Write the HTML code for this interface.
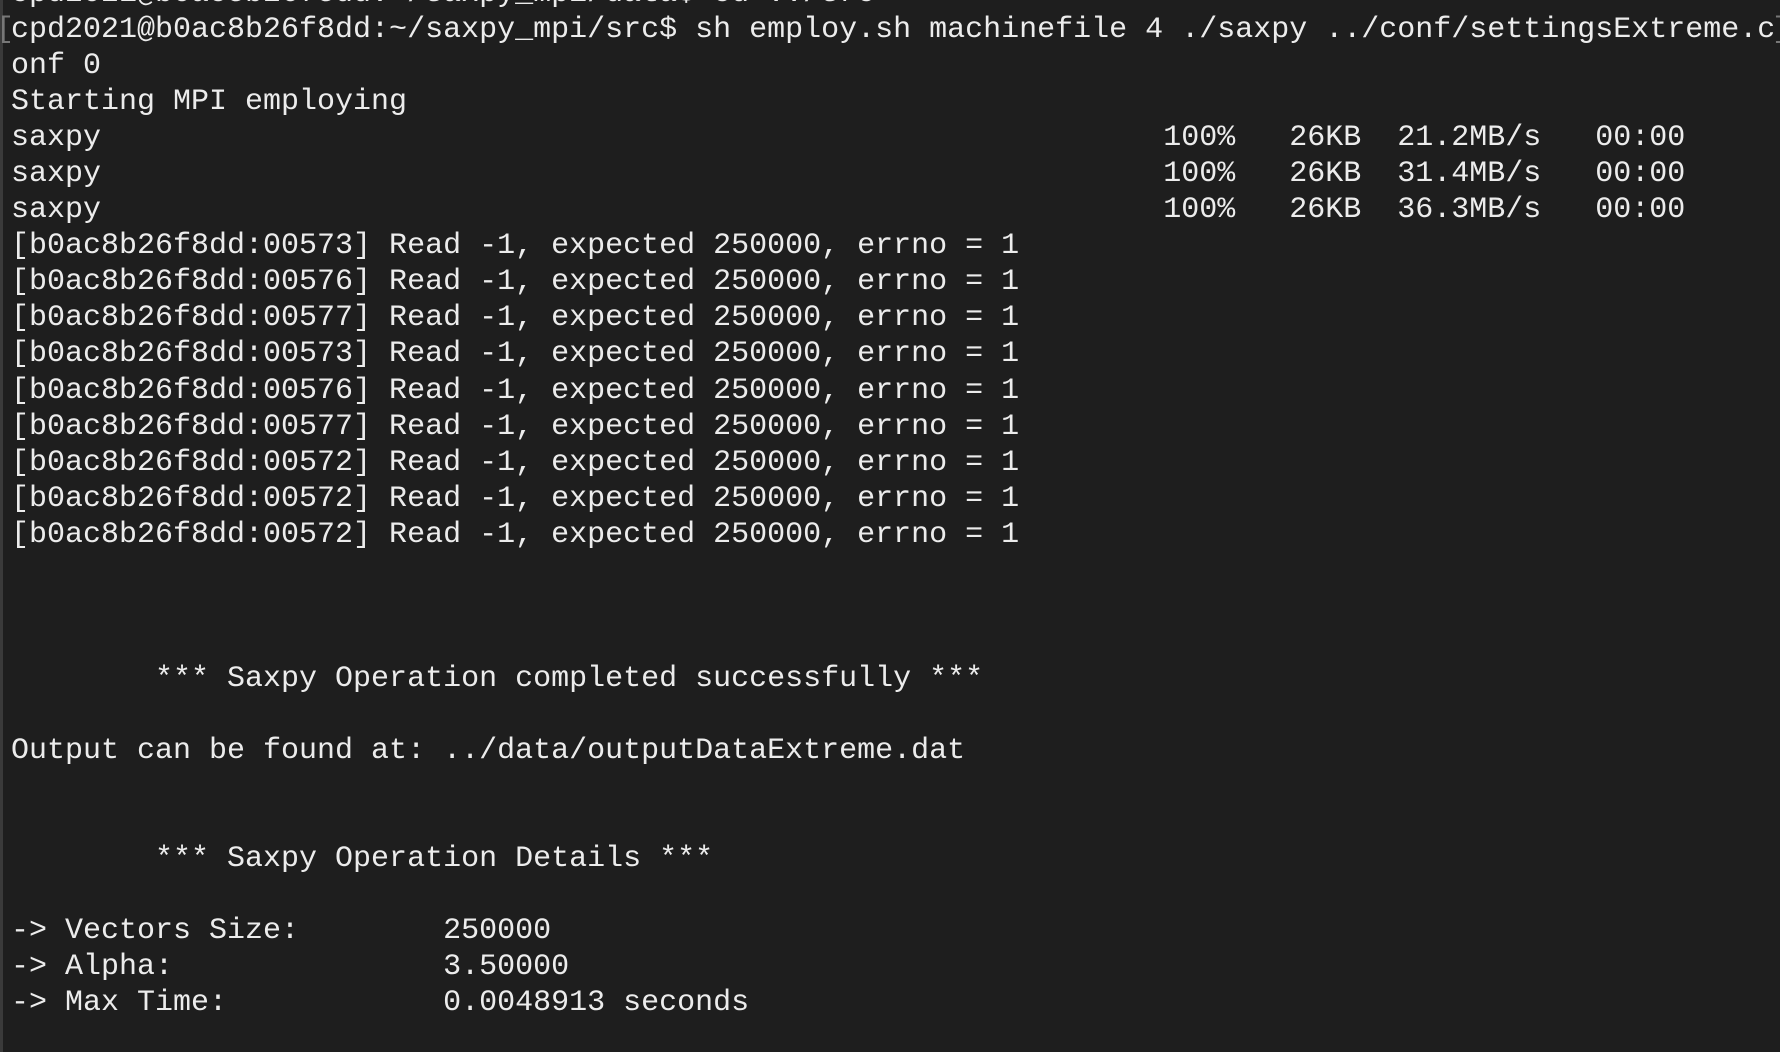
<!DOCTYPE html>
<html><head><meta charset="utf-8"><style>
html,body{margin:0;padding:0;width:1780px;height:1052px;overflow:hidden;background:#1e1e1e;}
.edge{position:absolute;left:0;top:0;width:3px;height:1052px;background:#3a3a3a;}
pre{position:absolute;left:11px;top:-24px;margin:0;font-family:"Liberation Mono",monospace;font-size:30px;line-height:36.04px;color:#ececec;white-space:pre;}
.b{position:absolute;color:#777;font-family:"Liberation Mono",monospace;font-size:30px;line-height:36px;}
</style></head><body>
<div class="edge"></div>
<span class="b" style="left:-4px;top:12px">[</span>
<span class="b" style="left:1772px;top:12px">]</span>
<pre>cpd2021@b0ac8b26f8dd:~/saxpy_mpi/data$ cd ../src
cpd2021@b0ac8b26f8dd:~/saxpy_mpi/src$ sh employ.sh machinefile 4 ./saxpy ../conf/settingsExtreme.c
onf 0
Starting MPI employing
saxpy                                                           100%   26KB  21.2MB/s   00:00
saxpy                                                           100%   26KB  31.4MB/s   00:00
saxpy                                                           100%   26KB  36.3MB/s   00:00
[b0ac8b26f8dd:00573] Read -1, expected 250000, errno = 1
[b0ac8b26f8dd:00576] Read -1, expected 250000, errno = 1
[b0ac8b26f8dd:00577] Read -1, expected 250000, errno = 1
[b0ac8b26f8dd:00573] Read -1, expected 250000, errno = 1
[b0ac8b26f8dd:00576] Read -1, expected 250000, errno = 1
[b0ac8b26f8dd:00577] Read -1, expected 250000, errno = 1
[b0ac8b26f8dd:00572] Read -1, expected 250000, errno = 1
[b0ac8b26f8dd:00572] Read -1, expected 250000, errno = 1
[b0ac8b26f8dd:00572] Read -1, expected 250000, errno = 1



        *** Saxpy Operation completed successfully ***

Output can be found at: ../data/outputDataExtreme.dat


        *** Saxpy Operation Details ***

-> Vectors Size:        250000
-> Alpha:               3.50000
-> Max Time:            0.0048913 seconds
</pre>
</body></html>
